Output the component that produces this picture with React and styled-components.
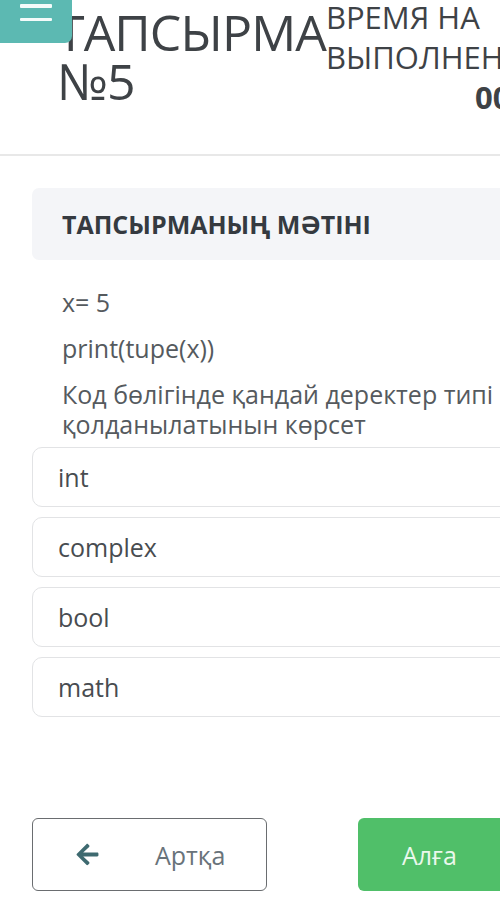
import React from "react";
import styled, { createGlobalStyle } from "styled-components";
import { FaArrowLeft } from "react-icons/fa";

const GlobalStyle = createGlobalStyle`
  html, body {
    margin: 0;
    padding: 0;
    background: #ffffff;
    overflow: hidden;
  }
  body {
    font-family: "Open Sans", "Noto Sans", sans-serif;
  }
`;

const options = ["int", "complex", "bool", "math"];

const App = () => {
  return (
    <Page>
      <GlobalStyle />
      <Header>
        <MenuButton aria-label="menu">
          <MenuLine />
          <MenuLine />
        </MenuButton>
        <Title>
          ТАПСЫРМА
          <br />
          №5
        </Title>
        <TimeBlock>
          <TimeLabel>ВРЕМЯ НА</TimeLabel>
          <TimeLabel>ВЫПОЛНЕНИЕ</TimeLabel>
          <Timer>00:00:00</Timer>
        </TimeBlock>
      </Header>

      <Panel>
        <PanelTitle>ТАПСЫРМАНЫҢ МӘТІНІ</PanelTitle>
      </Panel>

      <Question>
        <Line>x= 5</Line>
        <Line>print(tupe(x))</Line>
        <Line>Код бөлігінде қандай деректер типі қолданылатынын көрсет</Line>
      </Question>

      <OptionList>
        {options.map((o) => (
          <Option key={o}>{o}</Option>
        ))}
      </OptionList>

      <Footer>
        <BackButton>
          <FaArrowLeft size={25} color="#3e6a70" />
          <span>Артқа</span>
        </BackButton>
        <NextButton>Алға</NextButton>
      </Footer>
    </Page>
  );
};

const Page = styled.div`
  width: 500px;
  height: 916px;
  overflow: hidden;
  color: #3e4246;
`;

const Header = styled.header`
  position: relative;
  display: flex;
  height: 156px;
  border-bottom: 2px solid #e8e8e8;
  box-sizing: border-box;
`;

const MenuButton = styled.div`
  position: absolute;
  top: 0;
  left: 0;
  width: 72px;
  height: 43px;
  background: #5cb9b2;
  border-radius: 0 0 7px 0;
  display: flex;
  flex-direction: column;
  align-items: center;
  gap: 10px;
  padding-top: 4px;
  box-sizing: border-box;
`;

const MenuLine = styled.span`
  display: block;
  width: 32px;
  height: 3.5px;
  background: #f4fbfa;
  border-radius: 1px;
`;

const Title = styled.h1`
  margin: 8px 0 0 57px;
  font-size: 50px;
  font-weight: 400;
  line-height: 49px;
  letter-spacing: -0.9px;
  color: #3e4246;
  white-space: nowrap;
`;

const TimeBlock = styled.div`
  margin: -3px 0 0 0;
  display: flex;
  flex-direction: column;
  white-space: nowrap;
`;

const TimeLabel = styled.div`
  font-size: 31px;
  line-height: 40px;
  color: #3e4246;
`;

const Timer = styled.div`
  margin-left: 149px;
  font-size: 31px;
  line-height: 40px;
  font-weight: 700;
  color: #3e4246;
`;

const Panel = styled.div`
  margin: 32px 0 0 32px;
  height: 72px;
  background: #f4f5f8;
  border-radius: 7px 0 0 7px;
  display: flex;
  align-items: center;
  padding-left: 30px;
`;

const PanelTitle = styled.h2`
  margin: 0;
  font-size: 25px;
  font-weight: 700;
  color: #353a40;
  white-space: nowrap;
`;

const Question = styled.div`
  padding: 27px 0 0 62px;
  display: flex;
  flex-direction: column;
  gap: 16px;
`;

const Line = styled.p`
  margin: 0;
  font-size: 25px;
  line-height: 30px;
  color: #555a5e;
`;

const OptionList = styled.div`
  margin: 8px 0 0 32px;
  display: flex;
  flex-direction: column;
  gap: 10px;
`;

const Option = styled.div`
  height: 60px;
  width: 520px;
  box-sizing: border-box;
  border: 1.5px solid #e2e3e5;
  border-radius: 10px;
  display: flex;
  align-items: center;
  padding-left: 25px;
  font-size: 25px;
  color: #484c50;
`;

const Footer = styled.div`
  margin: 101px 0 0 32px;
  display: flex;
  gap: 91px;
`;

const BackButton = styled.button`
  width: 235px;
  height: 73px;
  flex-shrink: 0;
  box-sizing: border-box;
  border: 1.5px solid #6a6d70;
  border-radius: 6px;
  background: #ffffff;
  display: flex;
  align-items: center;
  padding: 0 0 0 42px;
  gap: 55px;
  font-family: "Open Sans", sans-serif;
  font-size: 25px;
  color: #69737a;
`;

const NextButton = styled.button`
  width: 200px;
  height: 73px;
  flex-shrink: 0;
  border: none;
  border-radius: 6px;
  background: #50bf69;
  display: flex;
  align-items: center;
  padding: 0 0 0 44px;
  font-family: "Open Sans", sans-serif;
  font-size: 25px;
  color: #eaf8ec;
`;

export default App;
